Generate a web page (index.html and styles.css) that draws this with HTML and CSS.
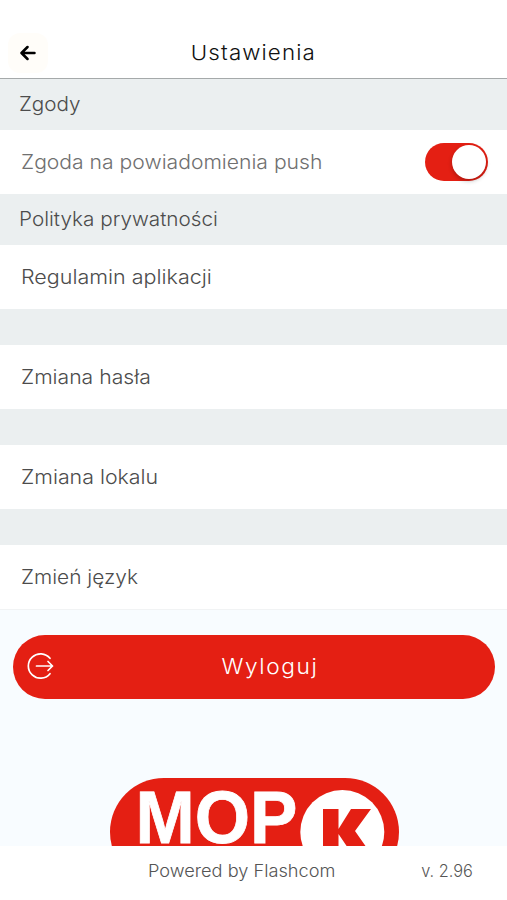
FILE: index.html
```html
<!DOCTYPE html>
<html lang="pl">
<head>
<meta charset="utf-8">
<meta name="viewport" content="width=device-width, initial-scale=1">
<title>Ustawienia</title>
<link rel="stylesheet" href="styles.css">
</head>
<body>
<div class="app">
  <header class="header">
    <button class="back" aria-label="Wstecz">
      <svg width="16" height="16" viewBox="0 0 16 16"><path d="M14.500 8H2M7.500 2L1.500 8l6 6"/></svg>
    </button>
    <h1 class="title"><span class="t t-title">Ustawienia</span></h1>
  </header>
  <main class="content">
    <h2 class="section"><span class="t t-zgody">Zgody</span></h2>
    <div class="row push"><span class="t t-push">Zgoda na powiadomienia push</span><span class="switch"><span class="knob"></span></span></div>
    <h2 class="section"><span class="t t-policy">Polityka prywatności</span></h2>
    <div class="row"><span class="t t-terms">Regulamin aplikacji</span></div>
    <div class="gap"></div>
    <div class="row"><span class="t t-pass">Zmiana hasła</span></div>
    <div class="gap"></div>
    <div class="row"><span class="t t-place">Zmiana lokalu</span></div>
    <div class="gap"></div>
    <div class="row"><span class="t t-lang">Zmień język</span></div>
    <div class="bottom">
      <button class="logout">
        <svg class="exit" width="28" height="28" viewBox="0 0 28 28"><path d="M23 6.300A12.200 12.200 0 1 0 23 21.700M9.500 14H25.500M21 9.500L25.500 14l-4.500 4.500"/></svg>
        <span class="t t-logout">Wyloguj</span>
      </button>
      <svg class="logo" width="290" height="68" viewBox="0 0 290 68">
        <rect class="red" x="0" y="0" width="289" height="108" rx="54"/>
        <text class="mop" x="25.500" y="64.500" textLength="162" lengthAdjust="spacingAndGlyphs">MOP</text>
        <circle class="white" cx="232.300" cy="54" r="42"/>
        <path class="red" d="M213 31h15.500v20L241 31h20l-16 22 14 20h-19l-11.500-17v17H213z"/>
      </svg>
    </div>
  </main>
  <footer class="footer"><span class="t t-powered">Powered by Flashcom</span><span class="t t-version">v. 2.96</span></footer>
</div>
</body>
</html>
```
FILE: styles.css
```css
* { box-sizing: border-box; }
body { margin: 0; background: #fff; font-family: Inter, "Open Sans", sans-serif; font-weight: 300; }
button { border: 0; padding: 0; font: inherit; }
.app { height: 900px; display: flex; flex-direction: column; overflow: hidden; }
.header { height: 79px; flex: none; padding-top: 27px; border-bottom: 1px solid #a5a9aa; display: grid; grid-template-columns: 48px 1fr 48px; align-items: center; }
.back { width: 40px; height: 40px; margin-left: 8px; border-radius: 12px; background: #fffdf9; display: grid; place-items: center; }
.back svg { fill: none; stroke: #000; stroke-width: 2.500; stroke-linecap: round; stroke-linejoin: round; }
.title { margin: 0; text-align: center; font-size: 20.500px; font-weight: 300; color: #111; }
.content { flex: 1; min-height: 0; display: flex; flex-direction: column; }
.section { height: 51px; flex: none; margin: 0; padding: 0 19px 1px; background: #ebeff0; display: flex; align-items: center; font-size: 19.500px; font-weight: 300; color: #4c4c4c; }
.row { height: 64px; flex: none; padding: 0 19px 0 20.500px; display: flex; align-items: center; justify-content: space-between; font-size: 19.500px; color: #4c4c4c; }
.push { color: #707070; }
.gap { height: 36px; flex: none; background: #ebeff0; }
.switch { width: 63px; height: 38px; padding: 2px; border-radius: 19px; background: #e41f13; display: flex; justify-content: flex-end; }
.knob { width: 34px; height: 34px; border-radius: 50%; background: #fff; box-shadow: 0 2px 4px rgba(0,0,0,.25); }
.bottom { flex: 1; min-height: 0; border-top: 1px solid #f1f3f4; padding: 25px 12px 0 13px; background: #f8fcff; overflow: hidden; display: flex; flex-direction: column; }
.logout { height: 64px; flex: none; border-radius: 32px; background: #e41f13; color: #fff; padding: 0 11px 2px 14px; display: grid; grid-template-columns: 28px 1fr; align-items: center; font-size: 21px; text-align: center; }
.exit { fill: none; stroke: #fff; stroke-width: 1.700; stroke-linecap: round; stroke-linejoin: round; }
.t-logout { justify-self: center; }
.logo { flex: none; margin: 79px 0 0 97px; }
.red { fill: #e41f13; }
.white, .mop { fill: #fff; }
.mop { font: bold 75px "Liberation Sans", sans-serif; stroke: #fff; stroke-width: .8; }
.footer { height: 54px; flex: none; padding: 0 34px 4px 147.500px; display: flex; justify-content: space-between; align-items: center; font-size: 17px; color: #555; }
.t { display: inline-block; white-space: nowrap; transform-origin: left center; }
.t-title { letter-spacing: 1px; transform-origin: center; transform: scaleX(1.090); }
.t-zgody { transform: scaleX(1.060); }
.t-push { transform: scaleX(1.083); }
.t-policy { transform: scaleX(1.062); }
.t-terms { transform: scaleX(1.103); }
.t-pass { transform: scaleX(1.085); }
.t-place { transform: scaleX(1.095); }
.t-lang { transform: scaleX(1.070); }
.t-logout { letter-spacing: 1.500px; transform-origin: center; transform: scaleX(1.080); }
.t-powered { transform: scaleX(1.070); }
.t-version { transform-origin: right center; transform: scaleX(.960); }
```
